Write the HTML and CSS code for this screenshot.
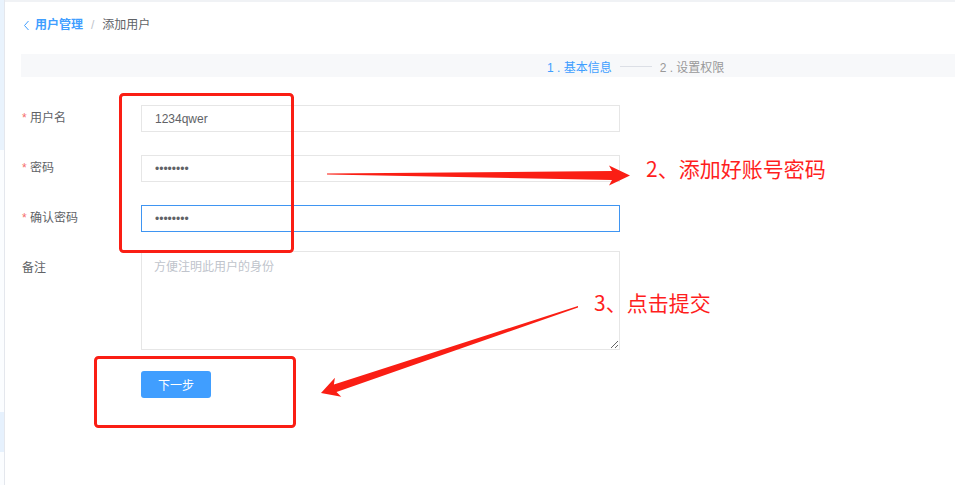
FILE: index.html
```html
<!DOCTYPE html>
<html lang="zh-CN">
<head>
  <meta charset="UTF-8">
  <title>添加用户</title>
  <link rel="stylesheet" href="styles.css">
</head>
<body>
<div class="app">
  <div class="side">
    <div class="side-top"></div>
    <div class="side-active"></div>
  </div>
  <main class="main">
    <div class="crumb">
      <span class="back">
        <svg width="7" height="11" viewBox="0 0 7 11"><path d="M5.5 1 L1.5 5.5 L5.5 10" fill="none" stroke="#409eff" stroke-width="1"/></svg>
      </span>
      <a class="crumb-link" href="#">用户管理</a>
      <span class="sep">/</span>
      <span class="crumb-cur">添加用户</span>
    </div>

    <div class="steps">
      <span class="step active">1 . 基本信息</span>
      <span class="step-line"></span>
      <span class="step">2 . 设置权限</span>
    </div>

    <form class="form">
      <div class="row">
        <label class="label"><i>*</i> 用户名</label>
        <input class="input" type="text" value="1234qwer">
      </div>
      <div class="row">
        <label class="label"><i>*</i> 密码</label>
        <input class="input" type="password" value="12345678">
      </div>
      <div class="row row-last">
        <label class="label"><i>*</i> 确认密码</label>
        <input class="input input-active" type="password" value="12345678">
      </div>
      <div class="row">
        <label class="label label-top">备注</label>
        <textarea class="textarea" placeholder="方便注明此用户的身份"></textarea>
      </div>
      <div class="row row-btn">
        <button class="btn" type="button">下一步</button>
      </div>
    </form>
  </main>
</div>

<!-- annotations drawn over the screenshot -->
<svg class="marks" width="955" height="485" viewBox="0 0 955 485">
  <rect x="120.5" y="94.5" width="172" height="157" rx="3" fill="none" stroke="#fa1e14" stroke-width="3"/>
  <rect x="95.5" y="357.5" width="199" height="69" rx="3" fill="none" stroke="#fa1e14" stroke-width="3"/>
  <polygon points="327,173.6 612,171 609,165.5 630,175.5 609,185.5 612,180 327,174.6" fill="#fa1e14"/>
  <polygon points="578,306 333.9,384.4 334.9,377.8 321,393 341.3,396.8 336.5,392 578,307.5" fill="#fa1e14"/>
</svg>
<div class="note note-2">2、添加好账号密码</div>
<div class="note note-3">3、点击提交</div>
</body>
</html>
```

FILE: styles.css
```css
* { box-sizing: border-box; }
body {
  margin: 0;
  background: #fff;
  font-family: "Liberation Sans", "Noto Sans CJK SC", sans-serif;
  font-size: 12px;
  color: #606266;
  overflow: hidden;
}
.app { display: flex; height: 485px; }
.side {
  width: 5px;
  border-right: 1px solid #e4e7ed;
  background: #fbfdff;
  display: flex;
  flex-direction: column;
}
.side-top { height: 150px; background: #e9f3fd; }
.side-active { margin-top: 262px; height: 40px; background: #e6f1fd; }
.main {
  flex: 1;
  border-top: 2px solid #f0f2f5;
  padding-left: 16px;
}
.crumb {
  display: flex;
  align-items: center;
  height: 16px;
  margin-top: 15px;
  line-height: 16px;
}
.back { display: flex; margin-left: 2px; margin-right: 5px; }
.crumb-link { color: #409eff; font-weight: bold; text-decoration: none; }
.sep { color: #c0c4cc; margin: 0 8px; }
.crumb-cur { color: #606266; }
.steps {
  margin-top: 21px;
  height: 23px;
  background: #f7f8fa;
  display: flex;
  align-items: center;
  padding-left: 526px;
  padding-top: 1px;
  color: #999;
}
.step.active { color: #409eff; }
.step-line {
  width: 32px;
  height: 1px;
  background: #dcdfe6;
  margin: 0 8px;
}
.form { margin-top: 28px; }
.row { display: flex; align-items: flex-start; margin-bottom: 23px; }
.row-last { margin-bottom: 19px; }
.row-btn { margin-bottom: 0; padding-left: 120px; margin-top: -2px; }
.label {
  width: 120px;
  padding-left: 1px;
  line-height: 27px;
  color: #606266;
}
.label i { font-style: normal; color: #f56c6c; }
.label-top { padding-top: 4px; }
.input {
  display: block;
  width: 479px;
  height: 27px;
  border: 1px solid #e6e6e6;
  border-radius: 0;
  padding: 0 13px;
  font: inherit;
  color: #606266;
  background: #fff;
  outline: none;
}
.input-active { border-color: #3f95f2; }
.textarea {
  width: 479px;
  height: 99px;
  border: 1px solid #e6e6e6;
  padding: 7px 12px;
  font: inherit;
  line-height: 16px;
  color: #606266;
  outline: none;
}
.textarea::placeholder { color: #c0c4cc; }
.btn {
  width: 70px;
  height: 27px;
  border: 0;
  border-radius: 3px;
  background: #409eff;
  color: #fff;
  font: inherit;
}
.marks { position: absolute; left: 0; top: 0; pointer-events: none; }
.note {
  position: absolute;
  color: #ff1e1e;
  font-family: "Noto Sans CJK SC", sans-serif;
  font-size: 21px;
  line-height: 21px;
  white-space: nowrap;
}
.note-2 { left: 646px; top: 158px; }
.note-3 { left: 594px; top: 292px; }
```
